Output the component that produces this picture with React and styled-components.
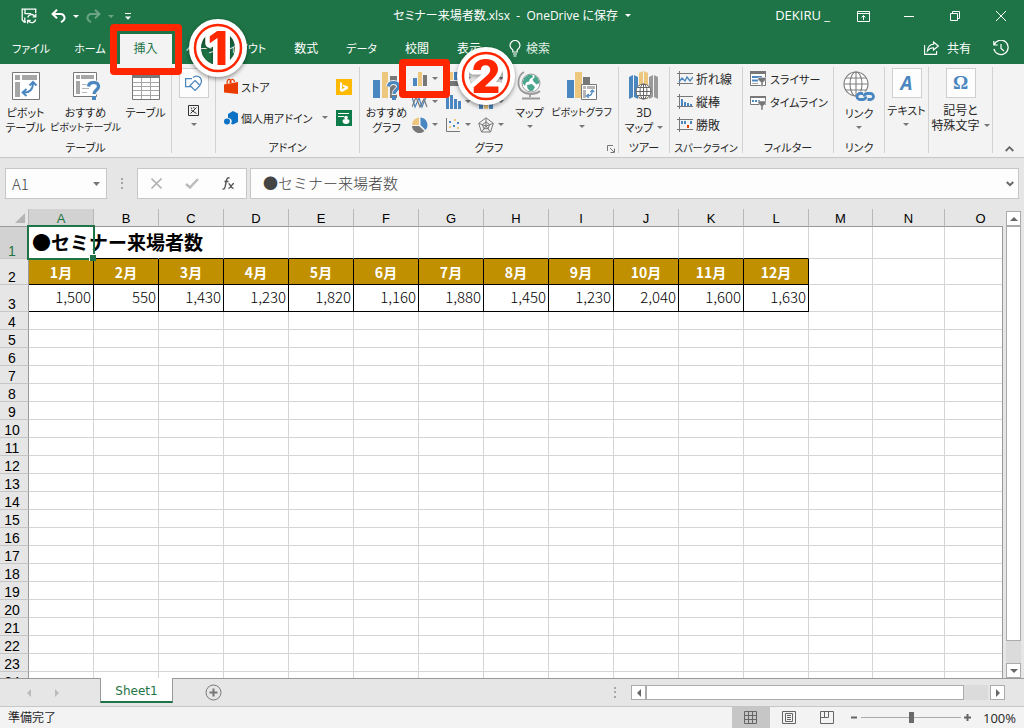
import React, { useState } from 'react';
import styled, { createGlobalStyle, css } from 'styled-components';

const GREEN = '#1e7446';
const RED = '#ff2600';
const GREY = '#777777';
const BLUE = '#4a86bf';
const SAND = '#eec77e';
const LINE = '#c6c6c6';

const GlobalStyle = createGlobalStyle`
  * { box-sizing: border-box; }
  body {
    margin: 0;
    background: #e6e6e6;
    font-family: 'Open Sans', 'Noto Sans CJK JP', sans-serif;
    font-size: 12px;
    font-feature-settings: 'palt';
    color: #262626;
  }
  button, input { font: inherit; font-feature-settings: inherit; color: inherit; }
  button { border: 0; padding: 0; background: none; cursor: pointer; }
  svg { display: block; flex: none; }
`;

const Window = styled.div`
  display: flex;
  flex-direction: column;
  height: 100vh;
  overflow: hidden;
`;

/* ---------- title bar ---------- */

const TitleBar = styled.header`
  display: grid;
  grid-template-columns: 1fr auto 1fr;
  align-items: center;
  height: 32px;
  flex: none;
  background: ${GREEN};
  color: #fff;
`;

const QuickAccess = styled.div`
  display: flex;
  align-items: center;
  gap: 7px;
  padding-left: 21px;
`;

const QuickButton = styled.button`
  display: flex;
  align-items: center;
  opacity: ${p => (p.$faded ? 0.35 : 1)};
  margin-right: ${p => p.$gap || 0}px;
`;

const FileName = styled.button`
  display: flex;
  align-items: center;
  gap: 7px;
  height: 32px;
  padding-bottom: 2px;
  white-space: pre;
`;

const WindowButtons = styled.div`
  display: flex;
  align-items: center;
  justify-content: flex-end;
`;

const UserName = styled.button`
  height: 32px;
  padding: 0 10px 2px 0;
  font-size: 13px;
`;

const WindowButton = styled.button`
  display: flex;
  align-items: center;
  justify-content: center;
  width: 46px;
  height: 32px;
`;

/* ---------- tabs ---------- */

const TabBar = styled.nav`
  display: flex;
  align-items: flex-end;
  height: 32px;
  flex: none;
  background: ${GREEN};
  color: #fff;
`;

const Tab = styled.button`
  position: relative;
  height: 30px;
  padding: ${p => (p.$first ? '0 10px 0 12px' : '0 14px')};
  font-size: ${p => (p.$kana ? 11 : 12)}px;
  line-height: 28px;
  white-space: nowrap;
  ${p => p.$active && css`
    background: #f3f3f3;
    color: ${GREEN};
  `}
`;

const Search = styled.button`
  display: flex;
  align-items: center;
  gap: 5px;
  height: 30px;
  padding: 0 0 2px 14px;
  color: #e0efe6;
`;

const TabTools = styled.div`
  display: flex;
  align-items: center;
  gap: 22px;
  height: 32px;
  margin-left: auto;
  padding-right: 15px;
`;

const ToolButton = styled.button`
  display: flex;
  align-items: center;
  gap: 8px;
`;

/* ---------- numbered marks ---------- */

const Frame = styled.span`
  position: absolute;
  z-index: 5;
  inset: ${p => p.$inset};
  border: 7px solid ${RED};
  border-radius: 4px;
  pointer-events: none;
`;

const Badge = styled.svg`
  position: absolute;
  z-index: 6;
  left: ${p => p.$left}px;
  top: ${p => p.$top}px;
  pointer-events: none;
  filter: drop-shadow(0 2px 2px rgba(0, 0, 0, 0.4));
`;

/* ---------- ribbon ---------- */

const Ribbon = styled.section`
  display: flex;
  flex: none;
  height: 94px;
  padding: 3px 0 4px;
  background: #f3f3f3;
  border-bottom: 1px solid ${LINE};
`;

const Group = styled.div`
  position: relative;
  display: flex;
  flex-direction: column;
  flex: none;
  width: ${p => p.$width}px;
  border-right: 1px solid #d2d2d2;
`;

const GroupBody = styled.div`
  display: flex;
  flex: 1;
  justify-content: center;
  align-items: flex-start;
`;

const GroupLabel = styled.div`
  height: 12px;
  line-height: 14px;
  font-size: ${p => (p.$long ? 10 : 11)}px;
  text-align: center;
  white-space: nowrap;
`;

const BigButton = styled.button`
  display: flex;
  flex-direction: column;
  align-items: center;
  width: ${p => p.$width}px;
  padding-top: 4px;
  gap: 5px;
  line-height: 15px;
  white-space: nowrap;
`;

const BigLabel = styled.span`
  display: flex;
  flex-direction: column;
  align-items: center;
  font-size: 11px;
`;

const LabelLine = styled.span`
  display: flex;
  align-items: center;
  gap: 4px;
  height: 15px;
  font-size: ${p => p.$size || 11}px;
`;

const CaretLine = styled.span`
  display: flex;
  align-items: center;
  height: 12px;
`;

const BoxedButton = styled(BigButton)`
  padding-top: 1px;
`;

const IconBox = styled.span`
  display: flex;
  align-items: center;
  justify-content: center;
  width: 30px;
  height: 30px;
  background: #fdfdfd;
  border: 1px solid #cfcfcf;
`;

const BoxGlyph = styled.span`
  font-family: ${p => p.$family}, serif;
  font-size: 19px;
  font-weight: bold;
  font-style: ${p => p.$style || 'normal'};
  line-height: 28px;
  color: ${BLUE};
`;

const AddinList = styled.div`
  display: grid;
  grid-template-columns: 1fr auto;
  row-gap: 8px;
  width: 100%;
  padding: 8px 7px 0 8px;
`;

const AddinButton = styled.button`
  display: flex;
  align-items: center;
  gap: 3px;
  height: 23px;
  font-size: 11px;
  white-space: nowrap;
`;

const AddinCaret = styled.span`
  margin-left: auto;
  margin-right: 8px;
`;

const ChartGrid = styled.div`
  display: grid;
  grid-template-columns: repeat(3, 33px);
  grid-auto-rows: 23px;
  margin-right: 2px;
`;

const ChartButton = styled.button`
  position: relative;
  display: flex;
  align-items: center;
  gap: 4px;
`;

const SmallList = styled.div`
  display: flex;
  flex-direction: column;
  width: 100%;
  padding-left: 7px;
`;

const SmallButton = styled.button`
  display: flex;
  align-items: center;
  gap: 3px;
  height: 23px;
  font-size: ${p => (p.$kana ? 11 : 12)}px;
  white-space: nowrap;
`;

const Launcher = styled.button`
  position: absolute;
  right: 3px;
  bottom: 0;
`;

const RibbonEnd = styled.div`
  display: flex;
  flex: 1;
  align-items: flex-end;
  justify-content: flex-end;
  padding: 0 10px 1px 0;
`;

/* ---------- formula bar ---------- */

const FormulaBar = styled.div`
  display: flex;
  align-items: center;
  flex: none;
  height: 51px;
  padding: 0 5px;
`;

const Field = styled.div`
  display: flex;
  align-items: center;
  height: 31px;
  background: #fdfdfd;
  border: 1px solid ${LINE};
  ${p => (p.$grow ? 'flex: 1;' : `width: ${p.$width}px;`)}
  padding: 0 ${p => p.$right || 0}px 0 0;
`;

const FieldInput = styled.input`
  flex: 1;
  min-width: 0;
  height: 29px;
  border: 0;
  outline: 0;
  padding: 0 0 ${p => p.$lift || 0}px ${p => p.$left}px;
  background: transparent;
  color: #444;
  font-family: 'Noto Sans CJK JP', sans-serif;
  font-size: 15px;
  font-feature-settings: normal;
  font-weight: 300;
`;

const Grip = styled.span`
  display: flex;
  justify-content: center;
  width: ${p => p.$width}px;
`;

const FxButton = styled.button`
  display: flex;
  align-items: center;
  justify-content: center;
  width: 36px;
  height: 29px;
`;

/* ---------- sheet ---------- */

const SheetRow = styled.main`
  display: flex;
  flex: 1;
  min-height: 0;
`;

const GridArea = styled.div`
  position: relative;
  flex: 1;
  min-width: 0;
  overflow: hidden;
  &::after {
    content: '';
    position: absolute;
    top: 17px;
    right: 0;
    bottom: 0;
    width: 1px;
    background: #999;
  }
`;

const Table = styled.table`
  table-layout: fixed;
  width: 1017px;
  border-collapse: separate;
  border-spacing: 0;
  background: #fff;
  font-family: 'Noto Sans CJK JP', sans-serif;
  font-feature-settings: normal;
  color: #000;
`;

const Col = styled.col`
  width: ${p => p.$width}px;
`;

const HeadCell = styled.th`
  height: 18px;
  padding: 0;
  border-right: 1px solid #b8b8b8;
  border-bottom: 1px solid #999;
  background: ${p => (p.$active ? '#d2d2d2' : '#e6e6e6')};
  color: ${p => (p.$active ? GREEN : '#000')};
  font-family: 'Liberation Sans', sans-serif;
  font-size: 13px;
  font-weight: normal;
  line-height: 14px;
  vertical-align: bottom;
`;

const Corner = styled(HeadCell)`
  padding: 0 3px 3px 0;
  svg { margin-left: auto; }
`;

const RowHead = styled(HeadCell)`
  height: ${p => p.$height}px;
  padding-right: 4px;
  border-right-color: #999;
  border-bottom-color: ${LINE};
  font-size: 14px;
`;

const Cell = styled.td`
  height: ${p => p.$height}px;
  padding: 0;
  border-right: 1px solid #d4d4d4;
  border-bottom: 1px solid #d4d4d4;
`;

const TitleCell = styled(Cell)`
  position: relative;
  padding: 0 0 2px 3px;
  border-bottom-color: #000;
  font-size: 19px;
  font-weight: 700;
  line-height: 26px;
  white-space: nowrap;
`;

const SpillCell = styled(Cell)`
  border-bottom-color: ${p => (p.$edge ? '#000' : '#d4d4d4')};
  border-right-color: ${p => (p.$open ? 'transparent' : '#d4d4d4')};
`;

const MonthCell = styled(Cell)`
  border-color: #000;
  background: #c09000;
  color: #fff;
  font-size: 14px;
  font-weight: 700;
  line-height: 20px;
  text-align: center;
`;

const ValueCell = styled(Cell)`
  padding: 0 2px 2px 0;
  border-color: #000;
  font-size: 15px;
  font-weight: 300;
  line-height: 20px;
  text-align: right;
`;

const Selection = styled.span`
  position: absolute;
  inset: -2px;
  border: 2px solid ${GREEN};
  &::after {
    content: '';
    position: absolute;
    right: -3px;
    bottom: -3px;
    width: 6px;
    height: 6px;
    background: ${GREEN};
    border: 1px solid #fff;
    border-width: 1px 0 0 1px;
  }
`;

/* ---------- scroll bars ---------- */

const VScroll = styled.div`
  display: flex;
  flex-direction: column;
  width: 15px;
  margin: 2px 3px 0;
`;

const HScroll = styled.div`
  display: flex;
  width: 374px;
  height: 15px;
  margin-right: 19px;
`;

const ScrollButton = styled.button`
  display: flex;
  align-items: center;
  justify-content: center;
  flex: none;
  width: 15px;
  height: 15px;
  background: #fff;
  border: 1px solid #ababab;
`;

const Track = styled.div`
  display: flex;
  flex: 1;
  flex-direction: ${p => (p.$vertical ? 'column' : 'row')};
  background: #dbdbdb;
  ${p => !p.$vertical && 'margin-right: 2px;'}
`;

const Thumb = styled.div`
  flex: 0 0 ${p => p.$size}%;
  background: #fff;
  border: 1px solid #ababab;
`;

/* ---------- sheet tabs and status bar ---------- */

const SheetTabs = styled.div`
  display: flex;
  align-items: center;
  flex: none;
  height: 28px;
  border-top: 1px solid #999;
`;

const SheetNav = styled.div`
  display: flex;
  align-items: center;
  gap: 20px;
  width: 100px;
  padding-left: 25px;
`;

const SheetTab = styled.button`
  align-self: flex-start;
  height: 25px;
  margin-top: -1px;
  padding-top: 3px;
  width: 73px;
  background: #fff;
  border: 1px solid #999;
  border-width: 0 1px 2px;
  border-bottom-color: ${GREEN};
  color: ${GREEN};
  font-family: 'DejaVu Sans', sans-serif;
  line-height: 20px;
`;

const AddSheet = styled.button`
  margin: 0 auto 0 32px;
`;

const StatusBar = styled.footer`
  display: flex;
  align-items: center;
  flex: none;
  height: 22px;
  padding: 0 8px;
  background: #f3f3f3;
  border-top: 1px solid ${LINE};
`;

const StatusText = styled.span`
  margin-right: auto;
  padding-bottom: 2px;
`;

const ViewButton = styled.button`
  display: flex;
  align-items: center;
  justify-content: center;
  width: 38px;
  height: 21px;
  background: ${p => (p.$active ? LINE : 'none')};
`;

const ZoomButton = styled.button`
  display: flex;
  align-items: center;
  height: 21px;
`;

const ZoomSlider = styled.input`
  appearance: none;
  width: 100px;
  height: 12px;
  margin: 0 3px;
  background: linear-gradient(#ababab, #ababab) center / 100% 1px no-repeat;
  &::-webkit-slider-thumb {
    appearance: none;
    width: 5px;
    height: 11px;
    background: #6a6a6a;
  }
`;

const ZoomValue = styled.button`
  width: 45px;
  font-size: 13px;
  text-align: right;
`;

/* ---------- icons ---------- */

const Caret = ({ color = GREY }) => (
  <svg width="6" height="3" viewBox="0 0 6 3"><path d="M0 0h6L3 3z" fill={color} /></svg>
);

const Arrow = ({ dir = 'up', color = '#666' }) => {
  const paths = {
    up: 'M0 6l4-4 4 4z',
    down: 'M0 2l4 4 4-4z',
    left: 'M6 0L2 4l4 4z',
    right: 'M2 0l4 4-4 4z',
  };
  return <svg width="8" height="8" viewBox="0 0 8 8"><path d={paths[dir]} fill={color} /></svg>;
};

const SaveIcon = () => (
  <svg width="16" height="16" viewBox="0 0 16 16" fill="none" stroke="#fff" strokeWidth="1.3">
    <path d="M5 14H3.2L1.2 12V1.2h13.5V5M4 1.2v4.5h6" />
    <path d="M3.8 14V9.5" />
    <path d="M6.7 9.5a4 4 0 0 1 7-1.5M14.8 5.8v3h-3M14.7 11.5a4 4 0 0 1-7 1.7M6.6 15.5v-3h3" />
  </svg>
);

const UndoIcon = ({ flip }) => (
  <svg width="15" height="14" viewBox="0 0 15 14" fill="none" stroke="#fff" strokeWidth="2">
    <path
      transform={flip ? 'matrix(-1 0 0 1 15 0)' : undefined}
      d="M1.5 5h8a3.8 3.8 0 0 1 2.5 6.8L10 13.2M6 .8L1.6 5 6 9.2"
    />
  </svg>
);

const CustomizeIcon = () => (
  <svg width="6" height="7" viewBox="0 0 6 7" fill="#fff"><path d="M0 0h6v1H0zM0 3.5h6L3 6.8z" /></svg>
);

const BulbIcon = () => (
  <svg width="12" height="17" viewBox="0 0 12 17" fill="none" stroke="#fff" strokeWidth="1.2">
    <path d="M3.8 12V10C2.3 8.8 1 7.5 1 5.5a5 5 0 0 1 10 0c0 2-1.3 3.3-2.8 4.5v2zM4 14h4M4.5 16h3" />
  </svg>
);

const ShareIcon = () => (
  <svg width="15" height="14" viewBox="0 0 15 14" fill="none" stroke="#fff" strokeWidth="1.1">
    <path d="M.6 4v9.4h12V10" />
    <path d="M9.5 1L14.3 5 9.5 9V6.8C6.8 6.8 5 7.8 3.4 10c.3-4 2.3-6.5 6.1-6.7z" />
  </svg>
);

const HistoryIcon = () => (
  <svg width="16" height="16" viewBox="0 0 16 16" fill="none" stroke="#fff" strokeWidth="1.2">
    <path d="M.8 1v4h4M1.2 4.8A7.2 7.2 0 1 1 .9 8.8M8 4v4.5l3 2.5" />
  </svg>
);

const PivotArrow = ({ x = 0, y = 0, s = 1 }) => (
  <g transform={`translate(${x} ${y}) scale(${s})`} fill="none" stroke={BLUE} strokeWidth={s < 0.8 ? 2.4 : 2}>
    <path d="M2 12.5c6 .5 9.5-3 9.5-10" />
    <path d="M5 9l-3.8 3.5L5 16M8 5.5L11.5 2 15 5.5" />
  </g>
);

const QuestionMark = ({ x, y }) => (
  <g transform={`translate(${x} ${y})`}>
    <path d="M1.5 5.5C1.8 2.8 3.5 1.5 6.5 1.5s5 1.5 5 4c0 3.5-4.5 3.5-4.5 8.5" fill="none" stroke="#f3f3f3" strokeWidth="5" />
    <path d="M1.5 5.5C1.8 2.8 3.5 1.5 6.5 1.5s5 1.5 5 4c0 3.5-4.5 3.5-4.5 7.5" fill="none" stroke={BLUE} strokeWidth="3.2" />
    <path d="M5 15h4v4H5z" fill={BLUE} />
  </g>
);

const PivotIcon = () => (
  <svg width="28" height="29" viewBox="0 0 28 29">
    <path d="M.5 1.5h27v27H.5z" fill="#fff" stroke={GREY} />
    <path d="M3 4h5v5H3zM10 4h15v5H10zM3 11h5v15H3z" fill="#a6a6a6" />
    <PivotArrow x={9.5} y={9} />
  </svg>
);

const RecommendPivotIcon = () => (
  <svg width="28" height="29" viewBox="0 0 28 29">
    <path d="M1.5 1.5h23v24h-23z" fill="#fff" stroke={GREY} />
    <path d="M4 4h4v4H4zM9 4h13v4H9zM4 10h4v13H4z" fill="#a6a6a6" />
    <path d="M10 13.5h5M10 17.5h7M10 21.5h5" stroke="#b5b5b5" />
    <QuestionMark x={15} y={10} />
  </svg>
);

const TableIcon = () => (
  <svg width="28" height="29" viewBox="0 0 28 29">
    <path d="M.5 3.5h27v25H.5z" fill="#fff" stroke={GREY} />
    <path d="M1 4h26v3H1z" fill={GREY} />
    <path d="M9.5 7v21M18.5 7v21M1 11.500h26M1 15.500h26M1 19.500h26M1 24.500h26" stroke="#a6a6a6" />
  </svg>
);

const ShapesIcon = () => (
  <svg width="17" height="16" viewBox="0 0 17 16" fill="none" stroke={BLUE} strokeWidth="1.2">
    <path d="M7 3.6H.6v8H6M8 2.5a4.6 4.6 0 1 1 7 7" />
    <path d="M10 5.5l5 5-5 5-5-5z" fill="#fff" />
  </svg>
);

const PictureIcon = () => (
  <svg width="11" height="11" viewBox="0 0 11 11" fill="none" stroke="#333">
    <path d="M.5.5h10v10H.5zM2.500 8.500l6-6M3 5l5.500 3.500M3 2.500l1 1.500M5.500 2l.8 1.400" />
  </svg>
);

const StoreIcon = () => (
  <svg width="14" height="17" viewBox="0 0 14 17">
    <path d="M3 6C3 0 7 0 7 5M6 5c0-4 4-5 4.500-1" fill="none" stroke="#eb3c00" strokeWidth="1.2" />
    <path d="M0 6.500L14 4v12L0 14.500z" fill="#eb3c00" />
  </svg>
);

const MyAddinIcon = () => (
  <svg width="14" height="14" viewBox="0 0 14 14" fill="#0b72c6">
    <path d="M4 3l5-3 5 2.500V11l-5 2.500-2-.8A3.500 3.500 0 0 0 4 7z" />
    <circle cx="3" cy="10.500" r="3" />
  </svg>
);

const BingIcon = () => (
  <svg width="16" height="16" viewBox="0 0 16 16">
    <path d="M0 0h16v16H0z" fill="#ffb900" />
    <path d="M4 3l2 .7v6.500l3-1.700-1.800-.8-.9-2.200L12 7.500v2.200L6 13l-2-1.200z" fill="#fff" />
  </svg>
);

const PeopleIcon = () => (
  <svg width="16" height="16" viewBox="0 0 16 16">
    <path d="M0 0h16v16H0z" fill="#0e7c4a" />
    <path d="M2 3.500h11M2 6.500h6" stroke="#fff" />
    <circle cx="10" cy="7.500" r="1.800" fill="#fff" />
    <path d="M6.500 11a3.500 2 0 0 1 7 0c0 2-1.500 3-3.500 3s-3.500-1-3.500-3z" fill="#fff" />
  </svg>
);

const RecommendChartIcon = () => (
  <svg width="29" height="29" viewBox="0 0 29 29">
    <path d="M1 9h7v18H1z" fill={BLUE} />
    <path d="M10 1h6v26h-6z" fill={SAND} />
    <path d="M18 5h7v22h-7z" fill={GREY} />
    <QuestionMark x={15} y={10} />
  </svg>
);

const GlobeIcon = () => (
  <svg width="28" height="29" viewBox="0 0 28 29">
    <circle cx="15" cy="12" r="9" fill="#fff" stroke="#9a9a9a" />
    <path d="M8 7l4-3 4-.5 1 2.500-3 2-1 2.500-3 1-1 3.500-2.500-3zM18 4l4 3 1.500 5-3 1.500-3-3-1-2 2-2zM11 14l5-1 3 3-2 3.500-3 .8-2.500-3z" fill="#4aa68c" />
    <path d="M8 1C1 5 1 16 6 20s13 4 18 0M14 23v3M6 27.500h18" fill="none" stroke="#9a9a9a" strokeWidth="1.800" />
  </svg>
);

const PivotChartIcon = () => (
  <svg width="30" height="29" viewBox="0 0 30 29">
    <path d="M0 9h7v18H0z" fill={BLUE} />
    <path d="M8 1h7v26H8z" fill={SAND} />
    <path d="M16 6h7v8h-7z" fill={GREY} />
    <path d="M14.500 13.500h15v15h-15z" fill="#fff" stroke={GREY} />
    <path d="M16 15h3v3h-3zM20 15h8v3h-8zM16 19h3v8h-3z" fill="#b5b5b5" />
    <PivotArrow x={19} y={18} s={0.55} />
  </svg>
);

const MapIcon = () => (
  <svg width="30" height="29" viewBox="0 0 30 29">
    <path d="M0 6l4-2v22l-4 2zM5 4l4 2v22l-4-2z" fill={BLUE} />
    <path d="M10 2l4-2v28h-4zM15 0l4 2v26h-4z" fill={SAND} />
    <path d="M20 6l4-2v22l-4 2zM25 4l4 2v22l-4-2z" fill="#9a9a9a" />
    <g fill="none" stroke="#666">
      <circle cx="14.500" cy="20.500" r="7.500" fill="#fff" />
      <ellipse cx="14.500" cy="20.500" rx="3.500" ry="7.500" />
      <path d="M7 20.500h15M14.500 13v15M8.500 16.500h12M8.500 24.500h12" />
    </g>
  </svg>
);

const LinkIcon = () => (
  <svg width="32" height="30" viewBox="0 0 32 30" fill="none">
    <g stroke="#7f7f7f" strokeWidth="1.1">
      <circle cx="13" cy="13" r="12" fill="#fff" />
      <ellipse cx="13" cy="13" rx="6" ry="12" />
      <path d="M1 13h24M13 1v24M3 7h20M3 19h20" />
    </g>
    <path d="M14.500 20.500h17V30h-17z" fill="#f3f3f3" />
    <g stroke={BLUE} strokeWidth="2.800">
      <path d="M20 22.500h-3a3 3 0 0 0 0 6H20a3 3 0 0 0 2.800-3" />
      <path d="M24.500 28.500h3a3 3 0 0 0 0-6H24a3 3 0 0 0-2.800 3" />
    </g>
  </svg>
);

const chartIcons = {
  column: (
    <>
      <path d="M1 7h4v8H1z" fill={BLUE} />
      <path d="M6 1h4v14H6z" fill={SAND} />
      <path d="M11 4h4v11h-4z" fill={GREY} />
    </>
  ),
  tree: (
    <>
      <path d="M1 1h7v8H1z" fill={SAND} />
      <path d="M9 1h6v8H9z" fill={BLUE} />
      <path d="M1 10h14v5H1z" fill={GREY} />
    </>
  ),
  waterfall: (
    <>
      <path d="M1 8h3v7H1z" fill={BLUE} />
      <path d="M6 5h4v5H6z" fill={SAND} />
      <path d="M11 2h4v5h-4z" fill={GREY} />
    </>
  ),
  line: (
    <g fill="none">
      <path d="M0 3l3 10 4-9 3 9 4-10" stroke={BLUE} strokeWidth="1.200" />
      <path d="M0 13L4 3l4 10 4-8 3 8" stroke={GREY} strokeWidth="1.200" />
    </g>
  ),
  histogram: <path d="M1 3h3v12H1zM5 1h3v14H5zM9 5h3v10H9zM13 7h3v8h-3z" fill={BLUE} />,
  combo: (
    <>
      <path d="M1 6h4v9H1z" fill={BLUE} />
      <path d="M6 4h4v11H6z" fill={SAND} />
      <path d="M11 7h4v8h-4z" fill={BLUE} />
      <path d="M0 5l5-3 5 3 5-3" fill="none" stroke={GREY} />
    </>
  ),
  pie: (
    <>
      <path d="M7 8V.5A7.500 7.500 0 0 0 0 8z" fill={SAND} />
      <path d="M8.500 8V.5a7.500 7.500 0 0 1 5 12.500z" fill={BLUE} />
      <path d="M0 9h7l5.500 5A7.500 7.500 0 0 1 0 9z" fill={GREY} />
    </>
  ),
  scatter: (
    <>
      <path d="M1.500 1v13.500H15" fill="none" stroke={GREY} />
      <path d="M4 4h2v2H4zM8 8h2v2H8zM12 5h2v2h-2z" fill={BLUE} />
      <path d="M9 2h2v2H9zM4 9h2v2H4zM12 10h2v2h-2z" fill={SAND} />
    </>
  ),
  radar: (
    <g fill="none" stroke={GREY}>
      <path d="M8 .8l7.300 5.500-2.800 8.700h-9L.7 6.300z" />
      <path d="M8 5l3.600 2.500-1.400 4.200H5.800L4.400 7.500z" />
      <path d="M8 1v8M15 6.500L8 9l4.500 6M1 6.500L8 9l-4.500 6" />
    </g>
  ),
};

const sparkIcons = {
  line: <path d="M2 11l3-4 3 3 2-4 3 4 3-4" fill="none" stroke={BLUE} strokeWidth="1.300" />,
  column: <path d="M4 5h2v7H4zM7 8h2v4H7zM10 9h2v3h-2zM13 10h2v2h-2z" fill={BLUE} />,
  winloss: (
    <>
      <path d="M4 4h2v3H4zM7 4h2v3H7zM13 4h2v3h-2z" fill={BLUE} />
      <path d="M10 8h2v3h-2z" fill="#eb3c00" />
    </>
  ),
};

const SparkIcon = ({ kind }) => (
  <svg width="16" height="16" viewBox="0 0 16 16">
    <path d="M0 2.500h16M0 12.500h16M2.500 0v15" stroke={GREY} />
    {sparkIcons[kind]}
  </svg>
);

const Funnel = ({ y }) => (
  <path transform={`translate(8 ${y})`} d="M0 0h8v2L5 5v4H3V5L0 2z" fill={GREY} stroke="#f3f3f3" strokeWidth=".5" />
);

const SlicerIcon = () => (
  <svg width="17" height="16" viewBox="0 0 17 16">
    <path d="M.5.5h15v14H.5z" fill="#fff" stroke={GREY} />
    <path d="M0 0h16v3H0z" fill={GREY} />
    <path d="M2 5h10v2H2zM2 8.500h6v2H2z" fill={BLUE} />
    <path d="M2 12h6v1H2z" fill="#a6a6a6" />
    <Funnel y={6.5} />
  </svg>
);

const TimelineIcon = () => (
  <svg width="17" height="16" viewBox="0 0 17 16">
    <path d="M.5 2.500h15v8H.5z" fill="#fff" stroke={GREY} />
    <path d="M0 2h16v2H0z" fill={GREY} />
    <path d="M2 6h2v2H2zM5 6h2v2H5zM8 6h2v2H8z" fill={BLUE} />
    <Funnel y={7} />
  </svg>
);

const LauncherIcon = () => (
  <svg width="8" height="8" viewBox="0 0 8 8" fill="none" stroke={GREY}>
    <path d="M.5 6V.5H6M3 3l4 4M7.500 3.500v4h-4" />
  </svg>
);

const GridViewIcon = () => (
  <svg width="14" height="13" viewBox="0 0 14 13" fill="none" stroke="#666">
    <path d="M.5.5h12v12H.5zM4.500.5v12M8.500.5v12M.5 4.500h12M.5 8.500h12" />
  </svg>
);

const PageViewIcon = () => (
  <svg width="14" height="13" viewBox="0 0 14 13" fill="none" stroke="#666">
    <path d="M.5.5h13v12H.5zM3.500 2.500h7v8h-7zM5 4.500h4M5 6.500h4M5 8.500h4" />
  </svg>
);

const BreakViewIcon = () => (
  <svg width="14" height="13" viewBox="0 0 14 13" fill="none" stroke="#666">
    <path d="M.5.5h13v12H.5zM4.500.5v6M8.500.5v6M.5 6.500h8" />
  </svg>
);

const Dots = () => (
  <svg width="2" height="11" viewBox="0 0 2 11" fill="#a6a6a6"><path d="M0 0h2v2H0zM0 4h2v2H0zM0 9h2v2H0z" /></svg>
);

const NumberBadge = ({ value, left, top }) => (
  <Badge $left={left} $top={top} width="58" height="58" viewBox="0 0 58 58">
    <circle cx="29" cy="29" r="23" fill="none" stroke="#fff" strokeWidth="12" />
    <text
      x="29" y="46" textAnchor="middle" fontFamily="Inter" fontWeight="800" fontSize="46"
      fill={RED} stroke="#fff" strokeWidth="9" paintOrder="stroke" strokeLinejoin="round"
    >
      {value}
    </text>
    <circle cx="29" cy="29" r="23" fill="none" stroke={RED} strokeWidth="2.500" />
  </Badge>
);

/* ---------- data ---------- */

const tabs = ['ファイル', 'ホーム', '挿入', 'ページレイアウト', '数式', 'データ', '校閲', '表示'];
const kanaTabs = ['ファイル', 'ホーム', 'ページレイアウト', 'データ'];
const charts = ['column', 'tree', 'waterfall', 'line', 'histogram', 'combo', 'pie', 'scatter', 'radar'];
const letters = 'ABCDEFGHIJKLMNO'.split('');
const widths = { M: 64, N: 72, O: 72 };
const values = ['1,500', '550', '1,430', '1,230', '1,820', '1,160', '1,880', '1,450', '1,230', '2,040', '1,600', '1,630'];
const rows = Array.from({ length: 24 }, (_, i) => i + 1);
const rowHeights = { 1: 32, 2: 26, 3: 27 };

const renderCell = (row, letter, i) => {
  const height = rowHeights[row] || 18;
  const inTable = i < values.length;
  if (row === 1 && i === 0) {
    return (
      <TitleCell key={letter} $height={height}>
        ●セミナー来場者数
        <Selection />
      </TitleCell>
    );
  }
  if (row === 1) return <SpillCell key={letter} $height={height} $edge={inTable} $open={i === 1} />;
  if (row === 2 && inTable) return <MonthCell key={letter} $height={height}>{i + 1}月</MonthCell>;
  if (row === 3 && inTable) return <ValueCell key={letter} $height={height}>{values[i]}</ValueCell>;
  return <Cell key={letter} $height={height} />;
};

const Header = ({ active, onSelect }) => (
  <>
    <TitleBar>
      <QuickAccess>
        <QuickButton aria-label="save" $gap={7}><SaveIcon /></QuickButton>
        <QuickButton aria-label="undo"><UndoIcon /></QuickButton>
        <QuickButton aria-label="undo list"><Caret color="#fff" /></QuickButton>
        <QuickButton aria-label="redo" $faded><UndoIcon flip /></QuickButton>
        <QuickButton aria-label="redo list" $faded $gap={4}><Caret color="#fff" /></QuickButton>
        <QuickButton aria-label="customize"><CustomizeIcon /></QuickButton>
      </QuickAccess>
      <FileName>
        {'セミナー来場者数.xlsx  -  OneDrive に保存'}
        <Caret color="#fff" />
      </FileName>
      <WindowButtons>
        <UserName>DEKIRU _</UserName>
        <WindowButton aria-label="ribbon display">
          <svg width="13" height="11" viewBox="0 0 13 11" fill="none" stroke="#fff">
            <path d="M.5.5h12v10H.5zM.5 2.500h12M6.500 9V4.500M4.500 6.500l2-2 2 2" />
          </svg>
        </WindowButton>
        <WindowButton aria-label="minimize">
          <svg width="10" height="1" viewBox="0 0 10 1"><path d="M0 0h10v1H0z" fill="#fff" /></svg>
        </WindowButton>
        <WindowButton aria-label="restore">
          <svg width="10" height="10" viewBox="0 0 10 10" fill="none" stroke="#fff">
            <path d="M.5 2.500h7v7h-7zM2.500 2V.5h7v7H8" />
          </svg>
        </WindowButton>
        <WindowButton aria-label="close">
          <svg width="10" height="10" viewBox="0 0 10 10" stroke="#fff"><path d="M0 0l10 10M10 0L0 10" /></svg>
        </WindowButton>
      </WindowButtons>
    </TitleBar>
    <TabBar>
      {tabs.map((name, i) => (
        <Tab
          key={name}
          $first={i === 0}
          $kana={kanaTabs.includes(name)}
          $active={active === name}
          onClick={() => onSelect(name)}
        >
          {name}
          {name === '挿入' && (
            <>
              <Frame $inset="-10px -10px -11px -10px" />
              <NumberBadge value="1" left={69} top={-15} />
            </>
          )}
        </Tab>
      ))}
      <Search><BulbIcon />検索</Search>
      <TabTools>
        <ToolButton><ShareIcon />共有</ToolButton>
        <ToolButton aria-label="history"><HistoryIcon /></ToolButton>
      </TabTools>
    </TabBar>
  </>
);

const InsertRibbon = () => (
  <Ribbon>
    <Group $width={172}>
      <GroupBody>
        <BigButton $width={46}>
          <PivotIcon />
          <BigLabel><span>ピボット</span><span>テーブル</span></BigLabel>
        </BigButton>
        <BigButton $width={74}>
          <RecommendPivotIcon />
          <BigLabel><span>おすすめ</span><LabelLine $size={10}>ピボットテーブル</LabelLine></BigLabel>
        </BigButton>
        <BigButton $width={46}>
          <TableIcon />
          <BigLabel><span>テーブル</span></BigLabel>
        </BigButton>
      </GroupBody>
      <GroupLabel>テーブル</GroupLabel>
    </Group>
    <Group $width={44}>
      <GroupBody>
        <BoxedButton $width={40} aria-label="図">
          <IconBox><ShapesIcon /></IconBox>
          <BigLabel>
            <LabelLine><PictureIcon /></LabelLine>
            <CaretLine><Caret /></CaretLine>
          </BigLabel>
        </BoxedButton>
      </GroupBody>
    </Group>
    <Group $width={144}>
      <GroupBody>
        <AddinList>
          <AddinButton><StoreIcon />ストア</AddinButton>
          <AddinButton aria-label="Bing"><BingIcon /></AddinButton>
          <AddinButton>
            <MyAddinIcon />個人用アドイン
            <AddinCaret><Caret /></AddinCaret>
          </AddinButton>
          <AddinButton aria-label="People Graph"><PeopleIcon /></AddinButton>
        </AddinList>
      </GroupBody>
      <GroupLabel>アドイン</GroupLabel>
    </Group>
    <Group $width={259}>
      <GroupBody>
        <BigButton $width={50}>
          <RecommendChartIcon />
          <BigLabel><span>おすすめ</span><span>グラフ</span></BigLabel>
        </BigButton>
        <ChartGrid>
          {charts.map(kind => (
            <ChartButton key={kind} aria-label={kind}>
              <svg width="16" height="16" viewBox="0 0 16 16">{chartIcons[kind]}</svg>
              <Caret />
              {kind === 'column' && (
                <>
                  <Frame $inset="-8px -5px -8px -13px" />
                  <NumberBadge value="2" left={45} top={-20} />
                </>
              )}
            </ChartButton>
          ))}
        </ChartGrid>
        <BigButton $width={34}>
          <GlobeIcon />
          <BigLabel><span>マップ</span><CaretLine><Caret /></CaretLine></BigLabel>
        </BigButton>
        <BigButton $width={70}>
          <PivotChartIcon />
          <BigLabel><LabelLine $size={10}>ピボットグラフ</LabelLine><CaretLine><Caret /></CaretLine></BigLabel>
        </BigButton>
      </GroupBody>
      <GroupLabel>グラフ</GroupLabel>
      <Launcher aria-label="chart options"><LauncherIcon /></Launcher>
    </Group>
    <Group $width={51}>
      <GroupBody>
        <BigButton $width={48}>
          <MapIcon />
          <BigLabel><LabelLine $size={12}>3D</LabelLine><LabelLine>マップ<Caret /></LabelLine></BigLabel>
        </BigButton>
      </GroupBody>
      <GroupLabel>ツアー</GroupLabel>
    </Group>
    <Group $width={73}>
      <GroupBody>
        <SmallList>
          <SmallButton><SparkIcon kind="line" />折れ線</SmallButton>
          <SmallButton><SparkIcon kind="column" />縦棒</SmallButton>
          <SmallButton><SparkIcon kind="winloss" />勝敗</SmallButton>
        </SmallList>
      </GroupBody>
      <GroupLabel $long>スパークライン</GroupLabel>
    </Group>
    <Group $width={91}>
      <GroupBody>
        <SmallList>
          <SmallButton $kana><SlicerIcon />スライサー</SmallButton>
          <SmallButton $kana><TimelineIcon />タイムライン</SmallButton>
        </SmallList>
      </GroupBody>
      <GroupLabel>フィルター</GroupLabel>
    </Group>
    <Group $width={51}>
      <GroupBody>
        <BigButton $width={44}>
          <LinkIcon />
          <BigLabel><span>リンク</span><CaretLine><Caret /></CaretLine></BigLabel>
        </BigButton>
      </GroupBody>
      <GroupLabel>リンク</GroupLabel>
    </Group>
    <Group $width={44}>
      <GroupBody>
        <BoxedButton $width={40}>
          <IconBox><BoxGlyph $family="'Open Sans'" $style="italic">A</BoxGlyph></IconBox>
          <BigLabel><span>テキスト</span><CaretLine><Caret /></CaretLine></BigLabel>
        </BoxedButton>
      </GroupBody>
    </Group>
    <Group $width={64}>
      <GroupBody>
        <BoxedButton $width={60}>
          <IconBox><BoxGlyph $family="'Liberation Serif'">Ω</BoxGlyph></IconBox>
          <BigLabel><LabelLine $size={12}>記号と</LabelLine><LabelLine $size={12}>特殊文字<Caret /></LabelLine></BigLabel>
        </BoxedButton>
      </GroupBody>
    </Group>
    <RibbonEnd>
      <button aria-label="collapse ribbon">
        <svg width="9" height="6" viewBox="0 0 9 6" fill="none" stroke="#666" strokeWidth="1.800"><path d="M.7 5l3.800-3.800L8.300 5" /></svg>
      </button>
    </RibbonEnd>
  </Ribbon>
);

const Formula = () => (
  <FormulaBar>
    <Field $width={102} $right={6}>
      <FieldInput aria-label="name box" defaultValue="A1" $left={6} />
      <svg width="7" height="4" viewBox="0 0 7 4"><path d="M0 0h7L3.500 4z" fill={GREY} /></svg>
    </Field>
    <Grip $width={30}><Dots /></Grip>
    <Field $width={110}>
      <FxButton aria-label="cancel">
        <svg width="11" height="11" viewBox="0 0 11 11" stroke="#b5b5b5" strokeWidth="1.600"><path d="M.5.5l10 10M10.500.5l-10 10" /></svg>
      </FxButton>
      <FxButton aria-label="enter">
        <svg width="14" height="11" viewBox="0 0 14 11" fill="none" stroke="#bbb" strokeWidth="2.400"><path d="M1 6l4 3.500L13 1" /></svg>
      </FxButton>
      <FxButton aria-label="insert function">
        <svg width="13" height="13" viewBox="0 0 13 13" fill="none" stroke="#555" strokeWidth="1.400">
          <path d="M.5 12c2 .5 2.500-1 3-4l1-5C5 1 6 .5 7.500 1M2.500 4.500h4" />
          <path d="M6.500 6.500c2 0 2 5 5 5M12 6.500c-2.500 0-3 5-5.500 5" />
        </svg>
      </FxButton>
    </Field>
    <Grip $width={3} />
    <Field $grow $right={4}>
      <FieldInput aria-label="formula" defaultValue="●セミナー来場者数" $left={12} $lift={3} />
      <svg width="8" height="6" viewBox="0 0 8 6" fill="none" stroke="#666" strokeWidth="2"><path d="M.8 1L4 4.200 7.200 1" /></svg>
    </Field>
  </FormulaBar>
);

const Sheet = () => (
  <SheetRow>
    <GridArea>
      <Table>
        <colgroup>
          <Col $width={29} />
          {letters.map(l => <Col key={l} $width={widths[l] || 65} />)}
        </colgroup>
        <thead>
          <tr>
            <Corner>
              <svg width="10" height="10" viewBox="0 0 10 10"><path d="M10 0v10H0z" fill="#b5b5b5" /></svg>
            </Corner>
            {letters.map(l => <HeadCell key={l} scope="col" $active={l === 'A'}>{l}</HeadCell>)}
          </tr>
        </thead>
        <tbody>
          {rows.map(row => (
            <tr key={row}>
              <RowHead scope="row" $height={rowHeights[row] || 18} $active={row === 1}>{row}</RowHead>
              {letters.map((l, i) => renderCell(row, l, i))}
            </tr>
          ))}
        </tbody>
      </Table>
    </GridArea>
    <VScroll>
      <ScrollButton aria-label="scroll up"><Arrow dir="up" /></ScrollButton>
      <Track $vertical><Thumb $size={95} /></Track>
      <ScrollButton aria-label="scroll down"><Arrow dir="down" /></ScrollButton>
    </VScroll>
  </SheetRow>
);

const Footer = () => (
  <>
    <SheetTabs>
      <SheetNav>
        <Arrow dir="left" color="#bbb" />
        <Arrow dir="right" color="#bbb" />
      </SheetNav>
      <SheetTab>Sheet1</SheetTab>
      <AddSheet aria-label="add sheet">
        <svg width="17" height="17" viewBox="0 0 17 17" fill="none" stroke={GREY}>
          <circle cx="8.500" cy="8.500" r="7.500" />
          <path d="M8.500 4.500v8M4.500 8.500h8" strokeWidth="2" />
        </svg>
      </AddSheet>
      <Grip $width={32}><Dots /></Grip>
      <HScroll>
        <ScrollButton aria-label="scroll left"><Arrow dir="left" /></ScrollButton>
        <Track><Thumb $size={93} /></Track>
        <ScrollButton aria-label="scroll right"><Arrow dir="right" /></ScrollButton>
      </HScroll>
    </SheetTabs>
    <StatusBar>
      <StatusText>準備完了</StatusText>
      <ViewButton aria-label="normal" $active><GridViewIcon /></ViewButton>
      <ViewButton aria-label="page layout"><PageViewIcon /></ViewButton>
      <ViewButton aria-label="page break"><BreakViewIcon /></ViewButton>
      <ZoomButton aria-label="zoom out">
        <svg width="12" height="7" viewBox="0 0 12 7"><path d="M5 2.500h6v2H5z" fill="#666" /></svg>
      </ZoomButton>
      <ZoomSlider type="range" aria-label="zoom" min="0" max="200" defaultValue="100" />
      <ZoomButton aria-label="zoom in">
        <svg width="7" height="7" viewBox="0 0 7 7"><path d="M0 2.500h7v2H0zM2.500 0h2v7h-2z" fill="#666" /></svg>
      </ZoomButton>
      <ZoomValue>100%</ZoomValue>
    </StatusBar>
  </>
);

const App = () => {
  const [active, setActive] = useState('挿入');

  return (
    <Window>
      <GlobalStyle />
      <Header active={active} onSelect={setActive} />
      <InsertRibbon />
      <Formula />
      <Sheet />
      <Footer />
    </Window>
  );
};

export default App;
